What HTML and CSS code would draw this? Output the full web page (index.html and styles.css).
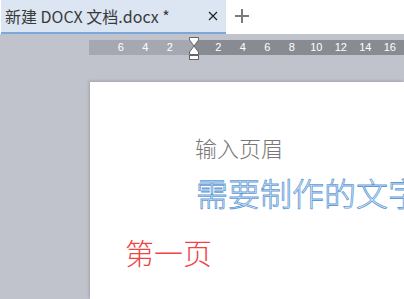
FILE: index.html
```html
<!DOCTYPE html>
<html lang="zh-CN">
<head>
  <meta charset="UTF-8">
  <title>新建 DOCX 文档.docx</title>
  <link rel="stylesheet" href="styles.css">
</head>
<body>
  <div class="tabbar">
    <div class="tab">
      <span class="tab-title">新建 DOCX 文档.docx *</span>
      <span class="tab-close">
        <svg width="10" height="10" viewBox="0 0 10 10"><path d="M1 1L9 9M9 1L1 9" stroke="#222" stroke-width="1.2"/></svg>
      </span>
    </div>
    <div class="tab-add">
      <svg width="16" height="16" viewBox="0 0 16 16"><path d="M8 1V15M1 8H15" stroke="#7a7a7a" stroke-width="2"/></svg>
    </div>
  </div>

  <div class="workspace">
    <div class="ruler">
      <div class="ruler-left">
        <span>6</span><span>4</span><span>2</span>
      </div>
      <div class="ruler-right">
        <span>2</span><span>4</span><span>6</span><span>8</span><span>10</span><span>12</span><span>14</span><span>16</span>
      </div>
      <!-- 缩进标记 -->
      <svg class="indent-marker" width="10" height="23" viewBox="0 0 10 23">
        <path d="M0.5 0.5H9.5V3L5 9L9.5 15V17.5H0.5V15L5 9L0.5 3Z" fill="#fff" stroke="#666"/>
        <rect x="0.5" y="18.5" width="9" height="4" fill="#fff" stroke="#666"/>
      </svg>
    </div>

    <div class="page">
      <p class="page-header">输入页眉</p>
      <p class="outline-text">需要制作的文字</p>
      <p class="page-no">第一页</p>
    </div>
  </div>
</body>
</html>
```

FILE: styles.css
```css
* {
  margin: 0;
  padding: 0;
  box-sizing: border-box;
}

body {
  width: 404px;
  height: 299px;
  overflow: hidden;
  font-family: "Noto Sans CJK SC", "Noto Sans", sans-serif;
  background-color: #c0c3cc;
  display: flex;
  flex-direction: column;
}

.tabbar {
  height: 34px;
  background-color: #fff;
  display: flex;
  align-items: stretch;
}

.tab {
  width: 225px;
  margin-left: 1px;
  background-color: #dce6f2;
  border-bottom: 2px solid #7ea7d9;
  display: flex;
  align-items: center;
  padding-left: 4px;
  padding-bottom: 1px;
}

.tab-title {
  font-size: 16px;
  color: #3a3a3a;
  flex: 1;
  white-space: nowrap;
}

.tab-close {
  width: 10px;
  height: 10px;
  margin-right: 8px;
  display: flex;
}

.tab-add {
  width: 32px;
  display: flex;
  align-items: center;
  justify-content: center;
  padding-bottom: 3px;
}

.workspace {
  flex: 1;
  display: flex;
  flex-direction: column;
  min-width: 0;
}

.ruler {
  position: relative;
  height: 15px;
  margin-top: 6px;
  margin-left: 89px;
  display: flex;
  font-family: "Liberation Sans", "DejaVu Sans", sans-serif;
  font-size: 11px;
  color: #fff;
}

.ruler span {
  width: 24.5px;
  text-align: center;
  line-height: 15px;
  flex-shrink: 0;
}

.ruler-left {
  width: 105px;
  background-color: #a5a8b1;
  display: flex;
  justify-content: flex-end;
  padding-right: 12px;
}

.ruler-right {
  flex: 1;
  background-color: #898b93;
  display: flex;
  padding-left: 12px;
  overflow: hidden;
}

.indent-marker {
  position: absolute;
  left: 100px;
  top: -3px;
}

.page {
  flex: 1;
  margin-top: 27px;
  margin-left: 90px;
  background-color: #fff;
  box-shadow: -1px -1px 3px rgba(0, 0, 0, 0.18);
  overflow: hidden;
}

.page-header {
  margin-top: 51px;
  padding-left: 105px;
  font-size: 22px;
  line-height: 28px;
  color: #777;
  font-weight: 300;
}

/* 空心字 */
.outline-text {
  margin-top: 12px;
  padding-left: 106px;
  font-size: 32px;
  line-height: 38px;
  white-space: nowrap;
  font-weight: 300;
  color: #f2f6fc;
  -webkit-text-stroke: 0.8px #5f9bd6;
}

.page-no {
  margin-top: 24px;
  padding-left: 35px;
  font-size: 29px;
  line-height: 34px;
  color: #f04545;
  font-weight: 300;
}
```
